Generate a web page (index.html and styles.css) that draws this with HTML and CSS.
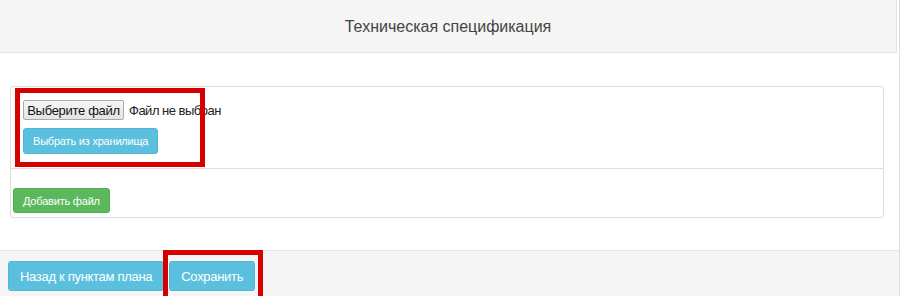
FILE: index.html
```html
<!DOCTYPE html>
<html lang="ru">

<head>
    <meta charset="UTF-8">
    <meta name="viewport" content="width=device-width, initial-scale=1.0">
    <title>Техническая спецификация</title>
    <link rel="stylesheet" href="styles.css">
</head>

<body>

    <div class="panel">
        <div class="panel-heading">Техническая спецификация</div>

        <div class="panel-body">
            <div class="files">
                <div class="files-top">
                    <div class="file-row">
                        <button class="file-btn">Выберите файл</button>
                        <span class="file-name">Файл не выбран</span>
                    </div>
                    <button class="btn btn-info btn-xs">Выбрать из хранилища</button>
                    <div class="mark mark-upload"></div>
                </div>
                <div class="files-bottom">
                    <button class="btn btn-success btn-xs">Добавить файл</button>
                </div>
            </div>
        </div>

        <div class="panel-footer">
            <button class="btn btn-info">Назад к пунктам плана</button>
            <button class="btn btn-info">Сохранить</button>
            <div class="mark mark-save"></div>
        </div>
    </div>

</body>

</html>
```

FILE: styles.css
```css
body {
    margin: 0;
    font-family: "Liberation Sans", Arial, sans-serif;
    color: #333;
    background-color: #fff;
    overflow: hidden;
}

.panel {
    width: 899px;
    height: 320px;
    border-right: 1px solid #ddd;
}

.panel-heading {
    height: 52px;
    margin-right: 2px;
    line-height: 54px;
    text-align: center;
    font-size: 16px;
    color: #444;
    background-color: #f5f5f5;
    border-bottom: 1px solid #e3e3e3;
    border-right: 1px solid #e3e3e3;
}

.panel-body {
    padding: 33px 15px 32px 10px;
}

.files {
    border: 1px solid #ddd;
    border-radius: 3px;
}

.files-top {
    position: relative;
    padding: 13px 12px 14px;
    border-bottom: 1px solid #ddd;
}

.file-row {
    display: flex;
    align-items: center;
    gap: 5px;
    height: 20px;
    margin-bottom: 8px;
    white-space: nowrap;
}

.file-btn {
    height: 20px;
    width: 101px;
    padding: 0;
    font-family: inherit;
    font-size: 13px;
    letter-spacing: -0.3px;
    color: #111;
    white-space: nowrap;
    background: linear-gradient(#f6f6f6, #e4e4e4);
    border: 1px solid #a9a9a9;
    border-radius: 2px;
}

.file-name {
    font-size: 13px;
    letter-spacing: -0.5px;
    color: #222;
}

.files-bottom {
    padding: 19px 2px 4px;
}

.btn {
    height: 30px;
    padding: 0 11px;
    font-family: inherit;
    font-size: 13px;
    letter-spacing: -0.3px;
    color: #fff;
    white-space: nowrap;
    border: 1px solid transparent;
    border-radius: 3px;
    cursor: pointer;
}

.btn-xs {
    height: 26px;
    padding: 0 9px;
    font-size: 11px;
    letter-spacing: -0.2px;
}

.btn-info {
    background-color: #5bc0de;
    border-color: #4fb6d6;
}

.btn-success {
    height: 25px;
    background-color: #5cb85c;
    border-color: #4cae4c;
}

.panel-footer {
    position: relative;
    display: flex;
    gap: 5px;
    height: 46px;
    padding: 10px 8px 0;
    background-color: #f5f5f5;
    border-top: 1px solid #e5e5e5;
}

.mark {
    position: absolute;
    border: 5px solid #d50000;
}

.mark-upload {
    left: 4px;
    top: 1px;
    width: 180px;
    height: 69px;
}

.mark-save {
    left: 163px;
    top: -1px;
    width: 90px;
    height: 60px;
}
```
